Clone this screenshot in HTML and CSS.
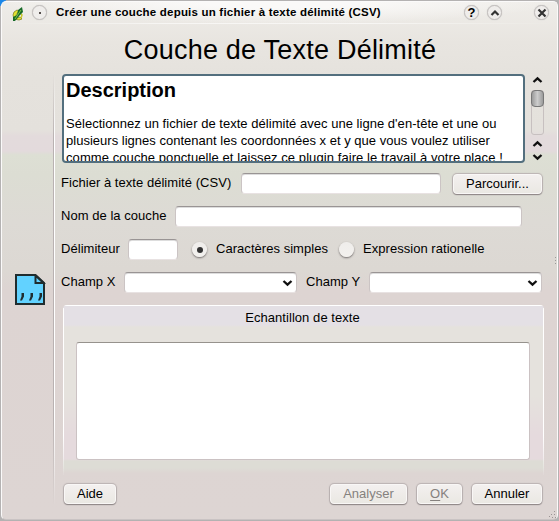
FILE: index.html
```
<!DOCTYPE html>
<html lang="fr">
<head>
<meta charset="utf-8">
<title>Créer une couche depuis un fichier à texte délimité (CSV)</title>
<link rel="stylesheet" href="styles.css">
</head>
<body>
<div class="window">
  <header class="titlebar">
    <svg class="app-icon" width="12" height="15" viewBox="0 0 12 15"><path d="M2 5 5 3 7 4 4 8 5 11 8 10 10 12 7 13 2 12 1 8Z" fill="#e4e331" stroke="#77761d" stroke-width=".7"/><path d="M8 6 10 8 9 11" fill="none" stroke="#c9c92c" stroke-width="1.5"/><path d="M10 0 11 5 8 8 3 14 1 14 1 10 5 8 6 3Z" fill="#176b28"/><path d="M9 3 3 12" stroke="#80c741"/></svg>
    <span class="round menu"><i></i></span>
    <h1 class="caption">Créer une couche depuis un fichier à texte délimité (CSV)</h1>
    <span class="round help">?</span>
    <span class="round shade"><svg width="10" height="8" viewBox="0 0 10 8"><path d="M1.500 6 5 2.500 8.500 6" fill="none" stroke="#333" stroke-width="2.2"/></svg></span>
    <span class="round close"><svg width="10" height="10" viewBox="0 0 10 10"><path d="M1.500 1.500 8.500 8.500M8.500 1.500 1.500 8.500" stroke="#333" stroke-width="2.2"/></svg></span>
  </header>
  <h2 class="heading">Couche de Texte Délimité</h2>
  <main class="body">
    <aside class="side">
      <svg width="32" height="32" viewBox="0.5 0.5 32 32"><path d="M1.500 1.500H21L29.500 9.500V30.500H1.500Z" fill="#62d2ff" stroke="#202c2e" stroke-width="2"/><path d="M21 2V9.500H29Z" fill="#62d2ff" stroke="#202c2e" stroke-width="2"/><path d="M7 19.500H9.500V23L7.500 27H5.500L7 23ZM16 19.500H18.500V23L16.500 27H14.500L16 23ZM25 19.500H27.500V23L25.500 27H23.500L25 23Z" fill="#202c2e"/></svg>
    </aside>
    <div class="content">
      <div class="desc-row">
        <div class="description">
          <h3>Description</h3>
          <p><span class="l1">Sélectionnez un fichier de texte délimité avec une ligne d'en-tête et une ou</span><br><span class="l2">plusieurs lignes contenant les coordonnées x et y que vous voulez utiliser</span><br><span class="l3">comme couche ponctuelle et laissez ce plugin faire le travail à votre place !</span></p>
        </div>
        <div class="scrollbar">
          <svg width="11" height="8" viewBox="0 0 11 8"><path d="M1.500 6 5.500 2.300 9.500 6" class="arrow"/></svg>
          <div class="track"><div class="thumb"></div></div>
          <svg width="11" height="8" viewBox="0 0 11 8"><path d="M1.500 6 5.500 2.300 9.500 6" class="arrow"/></svg>
          <svg class="down" width="11" height="8" viewBox="0 0 11 8"><path d="M1.500 2 5.500 5.700 9.500 2" class="arrow"/></svg>
        </div>
      </div>
      <div class="row">
        <label class="lab file">Fichier à texte délimité (CSV)</label><div class="field f-file"></div><button class="browse">Parcourir...</button>
      </div>
      <div class="row"><label class="lab name">Nom de la couche</label><div class="field f-name"></div></div>
      <div class="row">
        <label class="lab delim">Délimiteur</label><div class="field f-delim"></div>
        <span class="radio on"></span><label class="simple">Caractères simples</label>
        <span class="radio"></span><label class="regex">Expression rationelle</label>
      </div>
      <div class="row">
        <label class="lab champx">Champ X</label>
        <div class="field combo"><svg width="11" height="8" viewBox="0 0 11 8"><path d="M1.500 2 5.500 5.700 9.500 2" class="arrow"/></svg></div>
        <label class="champy">Champ Y</label>
        <div class="field combo"><svg width="11" height="8" viewBox="0 0 11 8"><path d="M1.500 2 5.500 5.700 9.500 2" class="arrow"/></svg></div>
      </div>
      <section class="group">
        <div class="group-title">Echantillon de texte</div>
        <div class="sample"></div>
      </section>
      <footer class="actions">
        <button class="aide">Aide</button>
        <button class="analyser" disabled>Analyser</button>
        <button class="ok" disabled><u>O</u>K</button>
        <button class="annuler">Annuler</button>
      </footer>
    </div>
  </main>
  <span class="handle"></span>
  <svg class="grip" width="8" height="8" viewBox="0 0 8 8"><path d="M5 0h1v1h-1zM2 3h1v1h-1zM5 3h1v1h-1zM0 5h1v1h-1zM3 6h1v1h-1zM6 6h1v1h-1z" fill="#9b9494"/></svg>
</div>
</body>
</html>
```
FILE: styles.css
```
* { box-sizing: border-box; }
body {
  margin: 0;
  width: 559px;
  height: 521px;
  overflow: hidden;
  background: linear-gradient(135deg, #1c87e8 0 4px, #b4b2b2 5px);
  font: 13px/16px "Liberation Sans", Arial, sans-serif;
  color: #000;
}
h1, h2, h3, p { margin: 0; }
.window {
  position: relative;
  width: 557px;
  height: 519px;
  margin: 1px;
  border: 1px solid #fbfafa;
  border-bottom-color: #c9c3c3;
  border-radius: 5px;
  background: linear-gradient(#efede9 0, #e8e5e0 40px, #e5e2dd 75px, #e4e1dc 128px, #e3dbdc 134px, #e3dadc 149px, #dddfd4 153px, #dcddd3 172px, #dddad5 220px, #dcd8d3 268px, #ddd4d2 288px, #ddd5d3 100%);
}
.titlebar {
  display: flex;
  align-items: center;
  height: 22px;
  padding: 0 8px 1px 10px;
  background: linear-gradient(90deg, transparent, #fff9 30% 65%, transparent) bottom / 100% 1px no-repeat, radial-gradient(ellipse at 50% 0, #faf9f8 20%, transparent 70%);
}
.app-icon { flex: none; margin-top: 3px; }
.round {
  display: flex;
  flex: none;
  align-items: center;
  justify-content: center;
  width: 15px;
  height: 15px;
  border: 1px solid #c4c0be;
  border-radius: 50%;
  background: #efedeb;
  box-shadow: 0 0 1px #bbb;
}
.menu { margin-left: 8px; }
.menu i { width: 2px; height: 2px; background: #554e4c; }
.caption { flex: none; width: 325px; margin: -1px 0 0 9px; font-size: 11.500px; line-height: 16px; font-weight: bold; white-space: nowrap; letter-spacing: .205px; }
.help { margin-left: 83px; font: bold 13px/13px "Liberation Sans", sans-serif; }
.shade { margin-left: 8px; }
.close { margin-left: 32px; }
.heading {
  height: 50px;
  padding: 10px 0 0 1px;
  font-size: 27px;
  font-weight: normal;
  line-height: 32px;
  letter-spacing: .22px;
  text-align: center;
  white-space: nowrap;
}
.body { display: flex; height: 432px; }
.side {
  flex: none;
  width: 54px;
  padding: 200px 0 0 13px;
  background: linear-gradient(transparent, #b9b2b2 15%, #b9b2b2 80%, transparent) 51px 0 / 1px 100% no-repeat, linear-gradient(transparent, #fff 15%, #fff 80%, transparent) 52px 0 / 1px 100% no-repeat;
}
.content { flex: none; width: 490px; padding-left: 5px; }
.desc-row { display: flex; margin-left: 1px; }
.description {
  flex: none;
  width: 463px;
  height: 89px;
  padding: 2px 3px 0 2px;
  overflow: hidden;
  border: 2px solid #536f7e;
  border-radius: 4px;
  background: #fff;
}
.description h3 { font-size: 20px; line-height: 24px; }
.description p { margin-top: 13px; line-height: 17px; white-space: nowrap; }
.l1 { letter-spacing: .03px; }
.l2 { letter-spacing: .015px; }
.l3 { letter-spacing: .08px; }
.scrollbar { display: flex; flex-direction: column; align-items: center; width: 13px; margin-left: 6px; padding-top: 2px; }
.scrollbar svg { flex: none; }
.arrow { fill: none; stroke: #101010; stroke-width: 2.3; }
.track { flex: none; width: 13px; height: 45px; margin: 6px 0 5px; border: 1px solid #c7c0c0; border-radius: 3px; }
.thumb { width: 13px; height: 17px; margin: -1px; border: 1px solid #777; border-radius: 4px; background: linear-gradient(90deg, #9b9b9b, #ccc 50%, #9b9b9b); }
.down { margin-top: 5px; }
.row { display: flex; height: 21px; margin-top: 12px; align-items: center; white-space: nowrap; }
.desc-row + .row { margin-top: 10px; }
.row label { flex: none; padding-bottom: 2px; letter-spacing: .04px; }
.file { width: 180px; }
.name { width: 114px; }
.delim { width: 67px; }
.champx { width: 63px; }
.field {
  flex: none;
  height: 21px;
  border: 1px solid #cbc4c4;
  border-top: 1px solid #999494;
  border-bottom-color: #e8e2e2;
  border-radius: 4px;
  background: #fff;
  box-shadow: inset 0 1px 0 #ddd;
}
.f-file { width: 200px; }
.f-name { width: 347px; }
.f-delim { width: 50px; }
.combo { display: flex; align-items: center; justify-content: flex-end; width: 173px; padding-right: 3px; }
.radio { flex: none; display: flex; align-items: center; justify-content: center; width: 15px; height: 15px; border-radius: 50%; background: linear-gradient(#efedeb, #f3f1ee); box-shadow: 0 1px 2px #6f6a6a; }
.radio.on { margin-left: 14px; }
.radio.on::after { content: ""; width: 6px; height: 6px; border-radius: 50%; background: #333; }
.simple { width: 123px; margin-left: 9px; }
.regex { margin-left: 9px; }
.champy { width: 63px; margin-left: 9px; }
button {
  flex: none;
  height: 20px;
  padding: 0 0 1px;
  border: 1px solid #f9f7f6;
  border-radius: 4px;
  background: linear-gradient(#f3f0ef, #eae8e3);
  box-shadow: 0 1px 1px #8e8787, 0 0 1px 1px #bbb3b3;
  color: #000;
  font: 13px/17px "Liberation Sans", Arial, sans-serif;
}
button:disabled { color: #85817e; }
.browse { width: 89px; margin-left: 12px; }
.group {
  width: 481px;
  height: 170px;
  margin: 12px 0 0 2px;
  padding: 5px 14px 0 13px;
  border-radius: 4px 4px 0 0;
  background:
    linear-gradient(#fff 75%, transparent) 0 3px / 1px 100% no-repeat,
    linear-gradient(#fff 75%, transparent) 100% 3px / 1px 100% no-repeat,
    linear-gradient(#fff, #fff) 0 0 / 100% 1px no-repeat,
    linear-gradient(#e4e0e5 0 20px, #e5e2dd 22px 90px, #e5dadd 130px 154px, #dddcd5 156px 163px, #ddd5d3 168px);
}
.group-title { height: 32px; margin-left: -1px; text-align: center; letter-spacing: .06px; }
.sample { width: 454px; height: 118px; border: 1px solid #cbc2c3; border-top-color: #96928d; border-radius: 3px; background: #fff; }
.actions { display: flex; margin: 9px 0 0 3px; }
.aide { width: 52px; }
.analyser { width: 77px; margin-left: 214px; }
.ok { width: 45px; margin-left: 10px; }
.ok u { text-underline-offset: 2px; }
.annuler { width: 70px; margin-left: 10px; }
.handle { position: absolute; right: 1px; top: 255px; width: 1px; height: 8px; background: repeating-linear-gradient(#999 0 1px, transparent 1px 3px); }
.grip { position: absolute; right: 0; bottom: 0; }
```
